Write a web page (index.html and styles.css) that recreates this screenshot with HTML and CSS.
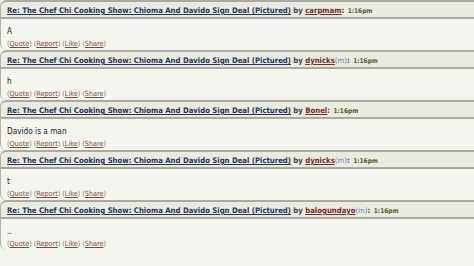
FILE: index.html
```html
<!DOCTYPE html>
<html lang="en">
<head>
    <meta charset="UTF-8">
    <meta name="viewport" content="width=device-width, initial-scale=1.0">
    <title>Chef Chi Cooking Show thread</title>
    <link rel="stylesheet" href="styles.css">
</head>
<body>
    <div class="thread">
        <div class="post">
            <div class="post-head">
                <a class="topic" href="#">Re: The Chef Chi Cooking Show: Chioma And Davido Sign Deal (Pictured)</a>
                by <a class="user" href="#">carpmam</a>: <span class="time">1:16pm</span>
            </div>
            <div class="post-body">
                <div class="text">A</div>
                <div class="actions">(<a href="#">Quote</a>) (<a href="#">Report</a>) (<a href="#">Like</a>) (<a href="#">Share</a>)</div>
            </div>
        </div>

        <div class="post">
            <div class="post-head">
                <a class="topic" href="#">Re: The Chef Chi Cooking Show: Chioma And Davido Sign Deal (Pictured)</a>
                by <a class="user" href="#">dynicks</a><span class="gender">(m)</span>: <span class="time">1:16pm</span>
            </div>
            <div class="post-body">
                <div class="text">h</div>
                <div class="actions">(<a href="#">Quote</a>) (<a href="#">Report</a>) (<a href="#">Like</a>) (<a href="#">Share</a>)</div>
            </div>
        </div>

        <div class="post">
            <div class="post-head">
                <a class="topic" href="#">Re: The Chef Chi Cooking Show: Chioma And Davido Sign Deal (Pictured)</a>
                by <a class="user" href="#">Bonel</a>: <span class="time">1:16pm</span>
            </div>
            <div class="post-body">
                <div class="text">Davido is a man</div>
                <div class="actions">(<a href="#">Quote</a>) (<a href="#">Report</a>) (<a href="#">Like</a>) (<a href="#">Share</a>)</div>
            </div>
        </div>

        <div class="post">
            <div class="post-head">
                <a class="topic" href="#">Re: The Chef Chi Cooking Show: Chioma And Davido Sign Deal (Pictured)</a>
                by <a class="user" href="#">dynicks</a><span class="gender">(m)</span>: <span class="time">1:16pm</span>
            </div>
            <div class="post-body">
                <div class="text">t</div>
                <div class="actions">(<a href="#">Quote</a>) (<a href="#">Report</a>) (<a href="#">Like</a>) (<a href="#">Share</a>)</div>
            </div>
        </div>

        <div class="post">
            <div class="post-head">
                <a class="topic" href="#">Re: The Chef Chi Cooking Show: Chioma And Davido Sign Deal (Pictured)</a>
                by <a class="user" href="#">balogundayo</a><span class="gender">(m)</span>: <span class="time">1:16pm</span>
            </div>
            <div class="post-body">
                <div class="text">..</div>
                <div class="actions">(<a href="#">Quote</a>) (<a href="#">Report</a>) (<a href="#">Like</a>) (<a href="#">Share</a>)</div>
            </div>
        </div>
    </div>
</body>
</html>
```

FILE: styles.css
```css
body {
    margin: 0;
    background-color: #f5f5ef;
    font-family: "DejaVu Sans Condensed", "DejaVu Sans", Verdana, sans-serif;
    color: #333;
    overflow: hidden;
}

.thread {
    width: 474px;
    overflow: hidden;
}

.post {
    background-color: #f5f5ef;
    border-left: 1px solid #b0b0a8;
    border-radius: 6px 0 0 6px;
}

.post-head {
    height: 14px;
    padding: 1px 6px 0;
    background-color: #e9eae0;
    border-top: 2px solid #a9a9a2;
    border-bottom: 2px solid #a9a9a2;
    border-radius: 6px 0 0 0;
    font-size: 7.7px;
    line-height: 15px;
    font-weight: bold;
    color: #444;
    white-space: nowrap;
}

.post-head a {
    text-decoration: underline;
}

.topic {
    color: #283158;
}

.user {
    color: #7a2a22;
}

.gender {
    color: #6a7fc0;
    font-weight: normal;
}

.time {
    color: #4f5a1e;
    font-size: 6.5px;
    margin-left: 1px;
}

.post-body {
    padding: 6px 6px 3px;
    height: 22px;
}

.text {
    font-size: 8.2px;
    line-height: 13px;
    color: #222;
}

.actions {
    font-size: 7.2px;
    line-height: 11px;
    color: #777;
}

.actions a {
    color: #7a4a3a;
}
```
